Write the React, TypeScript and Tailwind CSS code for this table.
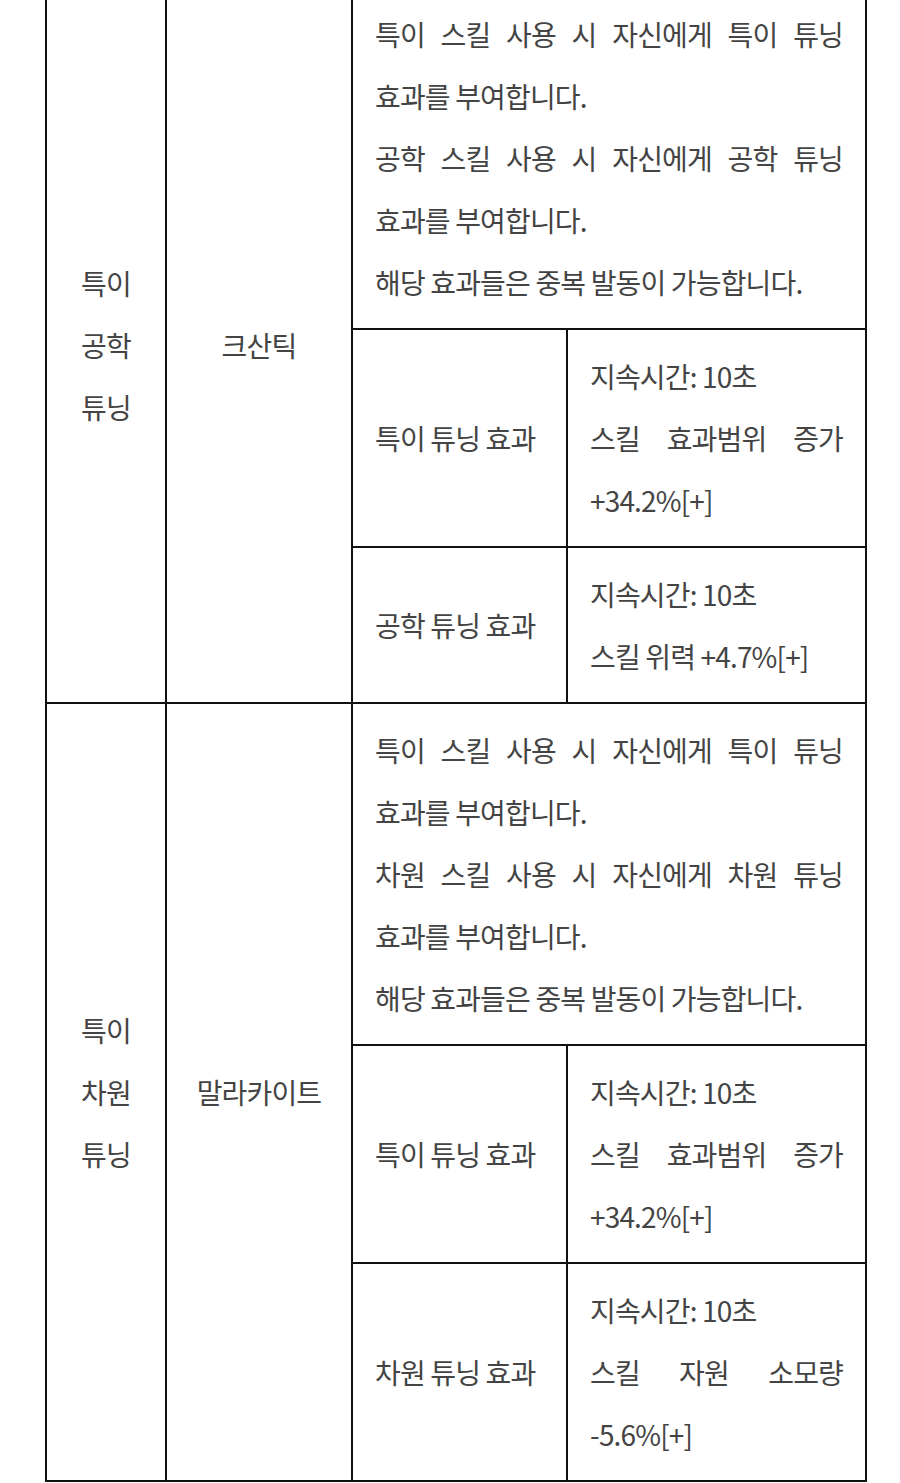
import React from "react";

type Effect = {
  name: string;
  lines: string[];
};

type Tuning = {
  title: string[];
  core: string;
  desc: string[];
  effects: Effect[];
};

const rows: Tuning[] = [
  {
    title: ["특이", "공학", "튜닝"],
    core: "크산틱",
    desc: [
      "특이 스킬 사용 시 자신에게 특이 튜닝 효과를 부여합니다.",
      "공학 스킬 사용 시 자신에게 공학 튜닝 효과를 부여합니다.",
      "해당 효과들은 중복 발동이 가능합니다.",
    ],
    effects: [
      { name: "특이 튜닝 효과", lines: ["지속시간: 10초", "스킬 효과범위 증가 +34.2%[+]"] },
      { name: "공학 튜닝 효과", lines: ["지속시간: 10초", "스킬 위력 +4.7%[+]"] },
    ],
  },
  {
    title: ["특이", "차원", "튜닝"],
    core: "말라카이트",
    desc: [
      "특이 스킬 사용 시 자신에게 특이 튜닝 효과를 부여합니다.",
      "차원 스킬 사용 시 자신에게 차원 튜닝 효과를 부여합니다.",
      "해당 효과들은 중복 발동이 가능합니다.",
    ],
    effects: [
      { name: "특이 튜닝 효과", lines: ["지속시간: 10초", "스킬 효과범위 증가 +34.2%[+]"] },
      { name: "차원 튜닝 효과", lines: ["지속시간: 10초", "스킬 자원 소모량 -5.6%[+]"] },
    ],
  },
];

const cell = "border-2 border-[#111] px-[22px] py-[15px] align-middle";

// keep "-5.6%[+]" style tokens together when wrapping
const nowrapTail = (s: string) => {
  const idx = s.lastIndexOf(" ");
  if (idx < 0) return s;
  return (
    <>
      {s.slice(0, idx + 1)}
      <span className="whitespace-nowrap">{s.slice(idx + 1)}</span>
    </>
  );
};

const App = () => {
  return (
    <div
      className="min-h-screen bg-white text-[28px] leading-[62px] tracking-[-0.03em] text-[#444] break-keep"
      style={{ fontFamily: '"Noto Sans CJK KR", "Noto Sans", sans-serif' }}
    >
      <table className="-mt-[14px] ml-[45px] w-[820px] table-fixed border-collapse">
        <colgroup>
          <col className="w-[120px]" />
          <col className="w-[186px]" />
          <col className="w-[215px]" />
          <col className="w-[299px]" />
        </colgroup>
        <tbody>
          {rows.map((row, i) => (
            <React.Fragment key={i}>
              <tr>
                <td rowSpan={3} className={`${cell} text-center`}>
                  {row.title.map((t) => (
                    <div key={t}>{t}</div>
                  ))}
                </td>
                <td rowSpan={3} className={`${cell} text-center`}>
                  {row.core}
                </td>
                <td colSpan={2} className={`${cell} text-justify`}>
                  {row.desc.map((d, j) => (
                    <div key={j}>{d}</div>
                  ))}
                </td>
              </tr>
              {row.effects.map((e, j) => (
                <tr key={j}>
                  <td className={cell}>{e.name}</td>
                  <td className={`${cell} text-justify`}>
                    {e.lines.map((l, k) => (
                      <div key={k}>{nowrapTail(l)}</div>
                    ))}
                  </td>
                </tr>
              ))}
            </React.Fragment>
          ))}
        </tbody>
      </table>
    </div>
  );
};

export default App;
